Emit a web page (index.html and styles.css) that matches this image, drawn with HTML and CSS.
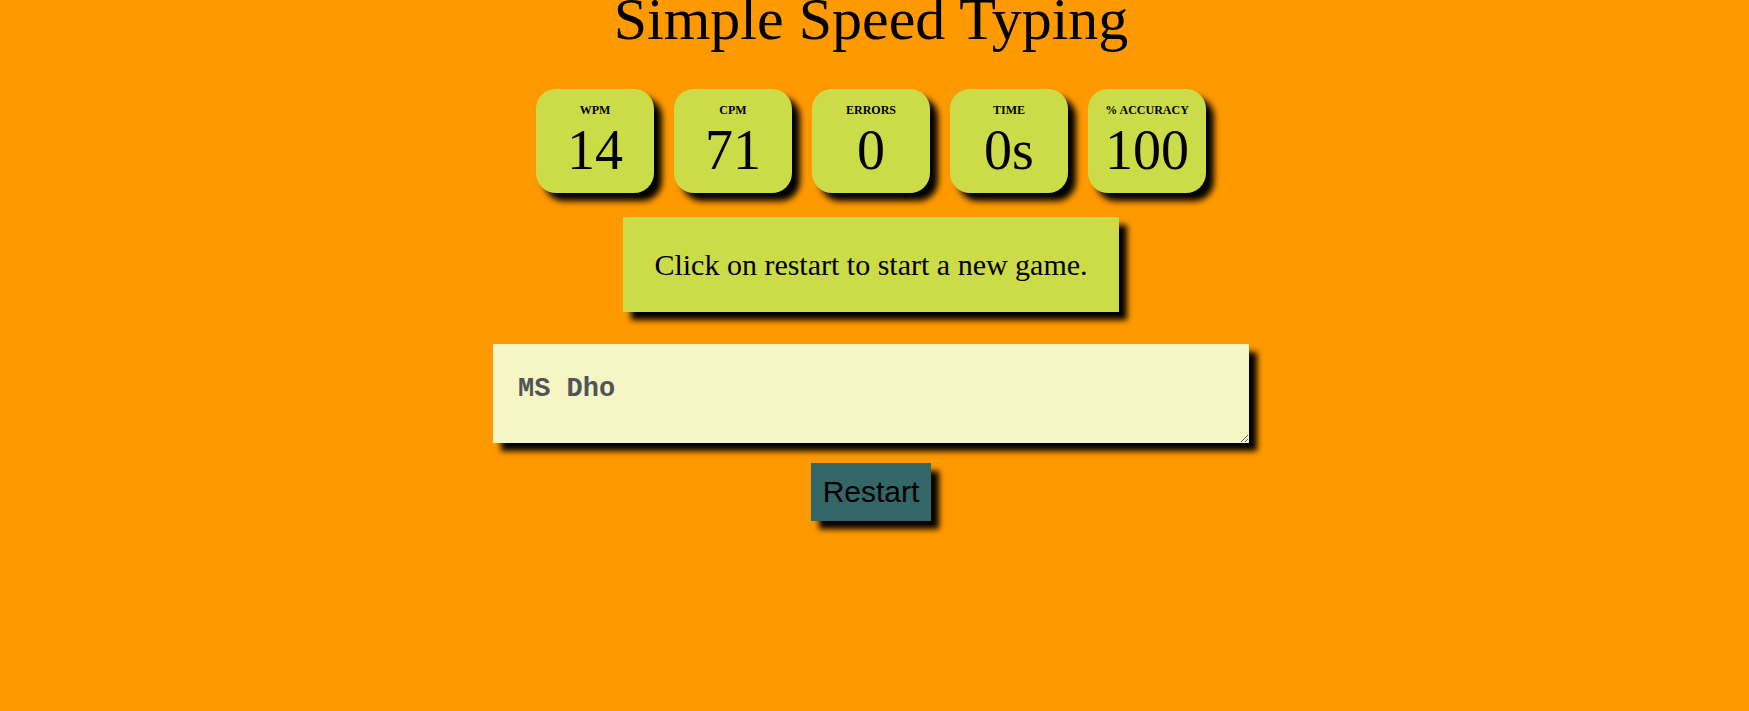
FILE: index.html
```html
<!DOCTYPE html>
<html lang="en">
<head>
<meta charset="utf-8">
<title>Simple Speed Typing</title>
<link rel="stylesheet" href="styles.css">
</head>
<body>
<main class="app">
  <h1 class="title">Simple Speed Typing</h1>
  <div class="stats">
    <div class="stat"><div class="stat-label">WPM</div><div class="stat-value">14</div></div>
    <div class="stat"><div class="stat-label">CPM</div><div class="stat-value">71</div></div>
    <div class="stat"><div class="stat-label">ERRORS</div><div class="stat-value">0</div></div>
    <div class="stat"><div class="stat-label">TIME</div><div class="stat-value">0s</div></div>
    <div class="stat"><div class="stat-label">% ACCURACY</div><div class="stat-value">100</div></div>
  </div>
  <div class="quote">Click on restart to start a new game.</div>
  <textarea class="input-area">MS Dho</textarea>
  <button class="restart">Restart</button>
</main>
</body>
</html>
```

FILE: styles.css
```css
html, body {
  margin: 0;
  padding: 0;
  background: #ff9900;
}

body {
  font-family: "Liberation Serif", "Times New Roman", serif;
  color: #000;
  height: 711px;
  overflow: hidden;
}

.app {
  display: flex;
  flex-direction: column;
  align-items: center;
  padding-right: 7px;
}

.title {
  font-size: 60px;
  font-weight: normal;
  line-height: 70px;
  margin: -16px 0 0 0;
}

.stats {
  display: flex;
  gap: 20px;
  margin-top: 35px;
}

.stat {
  width: 118px;
  height: 104px;
  box-sizing: border-box;
  padding-top: 14px;
  background: #ccdb48;
  border-radius: 20px;
  box-shadow: 8px 8px 6px #000;
  text-align: center;
}

.stat-label {
  font-size: 12px;
  font-weight: bold;
  line-height: 14px;
}

.stat-value {
  font-size: 56px;
  line-height: 64px;
  margin-top: 1px;
}

.quote {
  margin-top: 24px;
  background: #ccdb48;
  font-size: 30px;
  line-height: 35px;
  padding: 30px 31px;
  box-shadow: 8px 8px 6px #000;
}

.input-area {
  margin-top: 32px;
  width: 756px;
  height: 99px;
  box-sizing: border-box;
  border: none;
  padding: 30px 25px;
  background: #f6f5c4;
  font-family: "Liberation Mono", "Courier New", monospace;
  font-weight: bold;
  font-size: 27px;
  color: #505459;
  box-shadow: 8px 8px 6px #000;
  outline: none;
}

.restart {
  margin-top: 20px;
  font-family: "Liberation Sans", Arial, sans-serif;
  font-size: 30px;
  line-height: 34px;
  padding: 12px 12px;
  border: none;
  background: #336666;
  color: #000;
  box-shadow: 8px 8px 6px #000;
}
```
